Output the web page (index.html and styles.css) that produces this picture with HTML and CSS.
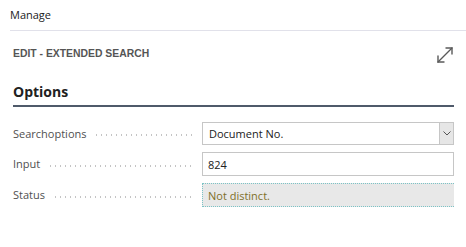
FILE: index.html
```html
<!DOCTYPE html>
<html lang="en">
<head>
    <meta charset="UTF-8">
    <title>Edit - Extended Search</title>
    <link rel="stylesheet" href="styles.css">
</head>
<body>
    <nav class="action-bar">
        <span class="action">Manage</span>
    </nav>

    <header class="page-header">
        <h1 class="page-title">EDIT - EXTENDED SEARCH</h1>
        <button class="expand-btn" title="Expand">
            <svg width="18" height="18" viewBox="0 0 18 18" fill="none" stroke="#5a5a5a" stroke-width="1.4" stroke-linecap="round">
                <path d="M2 16 L16 2"/>
                <path d="M10 2 H16 V8"/>
                <path d="M2 10 V16 H8"/>
            </svg>
        </button>
    </header>

    <section class="group">
        <h2 class="group-title">Options</h2>

        <div class="field">
            <label class="field-label">Searchoptions</label>
            <div class="select">
                <span class="select-value">Document No.</span>
                <span class="select-arrow">
                    <svg width="8" height="5" viewBox="0 0 8 5" fill="none" stroke="#555" stroke-width="1">
                        <path d="M0.5 0.5 L4 4 L7.5 0.5"/>
                    </svg>
                </span>
            </div>
        </div>

        <div class="field">
            <label class="field-label">Input</label>
            <div class="input">824</div>
        </div>

        <div class="field">
            <label class="field-label">Status</label>
            <div class="status">Not distinct.</div>
        </div>
    </section>
</body>
</html>
```

FILE: styles.css
```css
:root {
    --text: #212121;
    --label: #505050;
    --muted: #5a5a5a;
    --border: #c6c6c6;
    --line: #e1e1ea;
}

body {
    margin: 0;
    font-family: 'Open Sans', 'Noto Sans', sans-serif;
    font-size: 11px;
    color: var(--text);
    background: #fff;
}

/* Action bar */
.action-bar {
    margin-left: 10px;
    height: 30px;
    border-bottom: 1px solid var(--line);
    display: flex;
    align-items: center;
}
.action {
    font-size: 11px;
    color: var(--text);
    padding-bottom: 1px;
}

/* Header */
.page-header {
    display: flex;
    align-items: center;
    justify-content: space-between;
    padding: 7px 12px 0 13px;
    height: 30px;
}
.page-title {
    margin: 0;
    font-family: 'Liberation Sans', sans-serif;
    font-size: 10.4px;
    font-weight: bold;
    color: #555;
}
.expand-btn {
    background: none;
    border: none;
    padding: 0;
    width: 18px;
    height: 18px;
    margin-top: 3px;
    cursor: pointer;
}

/* Group */
.group {
    margin: 14px 12px 0 13px;
}
.group-title {
    margin: 0 0 15px 0;
    font-size: 14px;
    font-weight: 700;
    color: var(--text);
    padding-bottom: 3px;
    border-bottom: 2px solid #4f5a6a;
    line-height: 20px;
}
.field {
    display: grid;
    grid-template-columns: 189px 1fr;
    align-items: center;
    margin-bottom: 7px;
}
.field-label {
    display: flex;
    align-items: center;
    color: var(--label);
    font-size: 11px;
    line-height: 14px;
    padding-right: 10px;
}
.field-label::after {
    content: "";
    flex: 1;
    margin: 3px 0 0 8px;
    height: 2px;
    background-image: radial-gradient(circle, #c4c4c4 0.6px, transparent 0.9px);
    background-size: 5px 2px;
}
.select,
.input,
.status {
    height: 24px;
    box-sizing: border-box;
    display: flex;
    align-items: center;
    font-size: 11px;
}
.select {
    border: 1px solid var(--border);
    padding-left: 6px;
    justify-content: space-between;
    height: 23px;
}
.select-arrow {
    width: 13px;
    height: 21px;
    background: #e6e6e6;
    border-left: 1px solid var(--border);
    display: flex;
    align-items: center;
    justify-content: center;
}
.input {
    border: 1px solid var(--border);
    padding-left: 5px;
}
.status {
    background: #e8e8e8;
    border: 1px dotted #7cc3c6;
    border-right: none;
    padding-left: 5px;
    color: #80702a;
}
```
